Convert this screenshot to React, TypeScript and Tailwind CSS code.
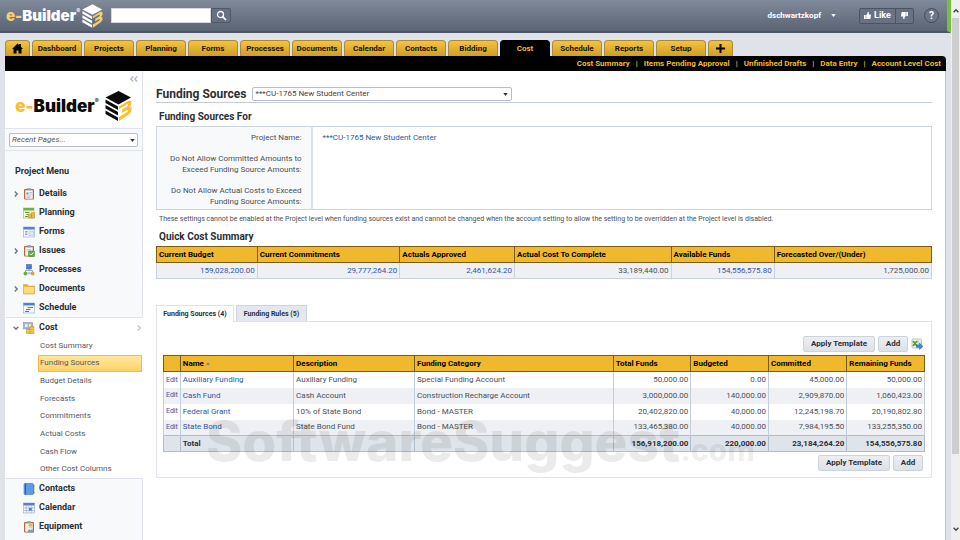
import clsx from 'clsx'
import type { ReactNode } from 'react'

const TABS = [
	'Dashboard',
	'Projects',
	'Planning',
	'Forms',
	'Processes',
	'Documents',
	'Calendar',
	'Contacts',
	'Bidding',
	'Cost',
	'Schedule',
	'Reports',
	'Setup',
]

const SUB_LINKS = ['Cost Summary', 'Items Pending Approval', 'Unfinished Drafts', 'Data Entry', 'Account Level Cost']

const COST_PAGES = [
	'Cost Summary',
	'Funding Sources',
	'Budget Details',
	'Forecasts',
	'Commitments',
	'Actual Costs',
	'Cash Flow',
	'Other Cost Columns',
]

const SUMMARY = [
	{ label: 'Current Budget', value: '159,028,200.00', link: true, width: 'w-[13%]' },
	{ label: 'Current Commitments', value: '29,777,264.20', link: true, width: 'w-[18.4%]' },
	{ label: 'Actuals Approved', value: '2,461,624.20', link: true, width: 'w-[14.8%]' },
	{ label: 'Actual Cost To Complete', value: '33,189,440.00', link: false, width: 'w-[20.2%]' },
	{ label: 'Available Funds', value: '154,556,575.80', link: true, width: 'w-[13.3%]' },
	{ label: 'Forecasted Over/(Under)', value: '1,725,000.00', link: false, width: 'w-[20.3%]' },
]

const FUNDS = [
	['Auxiliary Funding', 'Auxiliary Funding', 'Special Funding Account', '50,000.00', '0.00', '45,000.00', '50,000.00'],
	['Cash Fund', 'Cash Account', 'Construction Recharge Account', '3,000,000.00', '140,000.00', '2,909,870.00', '1,060,423.00'],
	['Federal Grant', '10% of State Bond', 'Bond - MASTER', '20,402,820.00', '40,000.00', '12,245,198.70', '20,190,802.80'],
	['State Bond', 'State Bond Fund', 'Bond - MASTER', '133,465,380.00', '40,000.00', '7,984,195.50', '133,255,350.00'],
]

const TOTALS = ['156,918,200.00', '220,000.00', '23,184,264.20', '154,556,575.80']

function Cube({ className, dark }: { className: string; dark?: boolean }) {
	const main = dark ? '#0b0b0b' : '#ffffff'
	const accent = dark ? '#fdbb30' : '#f7cf6b'
	return (
		<svg aria-hidden="true" className={className} viewBox="0 0 54 60">
			<path d="M27 0 52 13 27 27 1 13Z" fill={main} />
			<path d="M1 17 26 31v7L1 24ZM1 28l25 14v7L1 35ZM1 39l25 14v7L1 46Z" fill={main} />
			<path
				d="M28 31 46 20q7-3 7 4 0 5-4 8 5 0 4 6-1 6-6 9L28 60v-8l15-9q3-2 3-4 0-2-4 0l-8 5v-7l9-5q3-2 3-4t-3-1l-15 9Z"
				fill={accent}
			/>
		</svg>
	)
}

function Logo({ dark }: { dark?: boolean }) {
	return (
		<a
			className={clsx(
				"flex items-center font-['Inter','Liberation_Sans',sans-serif] font-black leading-none",
				dark ? 'gap-[6px] text-[17px] text-[#0b0b0b]' : 'gap-[2px] text-[15px] text-white'
			)}
			href="#home"
		>
			<span className="flex">
				<span className={dark ? 'text-[#fdbb30]' : 'text-[#f7cf6b]'}>e-</span>Builder
				<span className="text-[6px] font-normal">®</span>
			</span>
			<Cube className={dark ? 'h-[30px] w-[27px]' : 'h-[24px] w-[21px]'} dark={dark} />
		</a>
	)
}

type IconName =
	| 'details'
	| 'planning'
	| 'forms'
	| 'issues'
	| 'processes'
	| 'documents'
	| 'schedule'
	| 'cost'
	| 'contacts'
	| 'calendar'
	| 'equipment'

const clipboard = (
	<>
		<rect fill="#b5693f" height="21" rx="2" width="20" x="2" y="2" />
		<rect fill="#f3f5f9" height="17" width="15" x="4.500" y="4.500" />
		<rect fill="#8f99a8" height="4" rx="1" width="9" x="7.500" y="0.500" />
	</>
)

const windowFrame = (
	<>
		<rect fill="#f4f8fd" height="20" stroke="#7d9cc6" width="22" x="1" y="2" />
		<rect fill="#4f83cf" height="5" width="22" x="1" y="2" />
	</>
)

const ICONS: Record<IconName, ReactNode> = {
	details: (
		<>
			{clipboard}
			<path d="M7 9h4v4H7z" fill="#7286a8" />
			<path d="M13 9h5M13 12h4M7 16h10M7 19h7" stroke="#8d9ab0" strokeWidth="1.200" />
		</>
	),
	planning: (
		<>
			<rect fill="#eef7e8" height="20" stroke="#7db35c" width="21" x="1" y="2" />
			<rect fill="#6cb33f" height="5" width="21" x="1" y="2" />
			<path d="M4 11h9M7 15h6M4 19h6" stroke="#5ca035" strokeWidth="2" />
			<path d="M11 14h6v8h-6zM17 11h6v11h-6z" fill="#f0b83a" stroke="#c98b17" />
		</>
	),
	forms: (
		<>
			{windowFrame}
			<path d="M4 11h5M4 14h5M4 17h5" stroke="#6c8fc4" strokeWidth="1.500" />
			<path d="M12 10h9v9h-9z" fill="#dbe6f5" stroke="#a4bada" />
		</>
	),
	issues: (
		<>
			{clipboard}
			<path d="M7 9h9M7 12h9" stroke="#9aa5b8" />
			<rect fill="#5cb043" height="11" rx="1" stroke="#3b8a27" width="12" x="11" y="12" />
			<path d="m13.500 17 3 3 4.500-5" fill="none" stroke="#fff" strokeWidth="2" />
		</>
	),
	processes: (
		<>
			<path d="M12 8v5M5 18v-5h14v5" fill="none" stroke="#8293ad" strokeWidth="1.500" />
			<rect fill="#4a7fd0" height="9" stroke="#3561a7" width="10" x="7" y="1" />
			<circle cx="5" cy="19" fill="#64b246" r="4" />
			<circle cx="12" cy="18" fill="#b8c6dc" r="3" />
			<circle cx="19" cy="19" fill="#f29a36" r="4" />
		</>
	),
	documents: (
		<>
			<path d="M1 3h8l2 3h12v16H1z" fill="#e8b635" />
			<path d="M2 8h20v13H2z" fill="#fbdc78" />
			<path d="M1 3h8l2 3h12v16H1z" fill="none" stroke="#d19f25" />
		</>
	),
	schedule: (
		<>
			{windowFrame}
			<path d="M9 11h11M6 15h9M4 19h8" stroke="#3f7cd0" strokeWidth="2.200" />
		</>
	),
	cost: (
		<>
			<rect fill="#a9b4c6" height="13" stroke="#7f8ca1" width="18" x="1" y="1" />
			<path d="M4 4h5v6H4zM12 4h4v6h-4z" fill="#e9eef5" />
			<path d="M7 14h7v9H7zM14 9h8v14h-8z" fill="#f2b431" stroke="#c78a17" />
			<path d="M7 17h15M7 20h15M14 13h8" stroke="#fbd77c" />
		</>
	),
	contacts: (
		<>
			<path d="M20 4h3v5h-3z" fill="#5cb043" />
			<path d="M20 10h3v5h-3z" fill="#f2b431" />
			<path d="M20 16h3v5h-3z" fill="#e0663a" />
			<rect fill="#5b9be8" height="22" rx="2" stroke="#2e62b0" width="19" x="2" y="1" />
			<path d="M5 1v22" stroke="#2e62b0" strokeWidth="2" />
		</>
	),
	calendar: (
		<>
			{windowFrame}
			<path d="M1 12h22M1 17h22M6.500 7v15M12 7v15M17.500 7v15" stroke="#8fa9cf" strokeWidth="1.300" />
			<path d="M12 12h5.500v5H12z" fill="#4f83cf" />
		</>
	),
	equipment: (
		<>
			{clipboard}
			<circle cx="15" cy="11" fill="#f3c992" r="4" />
			<path d="M10.500 10q0-5 4.500-5t4.500 5z" fill="#f2b431" />
			<path d="M9 23q0-7 6-7t7 7z" fill="#7d9cc6" />
			<path d="m13 16 2 3 2-3z" fill="#fff" />
		</>
	),
}

function MenuIcon({ name }: { name: IconName }) {
	return (
		<svg aria-hidden="true" className="size-3" viewBox="0 0 24 24">
			{ICONS[name]}
		</svg>
	)
}

function Chevron({ className }: { className?: string }) {
	return (
		<svg aria-hidden="true" className={clsx('size-[6px]', className)} fill="none" viewBox="0 0 10 10">
			<path d="m3 1 4 4-4 4" stroke="currentColor" strokeWidth="2.400" />
		</svg>
	)
}

function MenuItem({ label, icon, expandable, open }: { label: string; icon: IconName; expandable?: boolean; open?: boolean }) {
	return (
		<a className="flex h-[19px] items-center pl-2 pr-px text-[9px] font-bold text-[#2b2f36]" href={`#${icon}`}>
			<span className="w-[10px] text-[#6f7683]">{expandable && <Chevron className={open ? 'rotate-90' : undefined} />}</span>
			<MenuIcon name={icon} />
			<span className="ml-1 flex-1">{label}</span>
			{open && <Chevron className="text-[#c3cad6]" />}
		</a>
	)
}

function Caret({ className }: { className: string }) {
	return (
		<svg aria-hidden="true" className={clsx('pointer-events-none', className)} viewBox="0 0 6 4">
			<path d="M0 0h6L3 4Z" fill="currentColor" />
		</svg>
	)
}

function TopBar() {
	return (
		<header className="flex h-[33px] shrink-0 items-center border-b-2 border-r-4 border-b-[#4c5564] border-r-[#74c043] bg-linear-to-b from-[#7f8a9a] to-[#5b6473] pl-[6px] pr-2 text-white">
			<div className="w-[105px]">
				<Logo />
			</div>
			<form className="flex h-[15px] flex-1">
				<input aria-label="Search" className="w-[100px] border border-[#d5d9df] bg-white px-1 text-[8px] text-black outline-none" type="text" />
				<button aria-label="Search" className="flex w-5 items-center justify-center rounded-r-xs border border-[#4f5867] bg-[#667080]" type="button">
					<svg aria-hidden="true" className="size-[11px]" fill="none" stroke="#fff" viewBox="0 0 22 22">
						<circle cx="9" cy="9" r="6" strokeWidth="2.600" />
						<path d="m13 13 7 7" strokeWidth="3.500" />
					</svg>
				</button>
			</form>
			<button className="flex items-center gap-[10px] text-[8px] font-bold" type="button">
				dschwartzkopf
				<Caret className="h-[3px] w-[5px]" />
			</button>
			<div className="ml-[23px] flex h-4 overflow-hidden rounded-xs border border-[#4a5362] bg-[#687282] text-[9px] font-bold">
				<button className="flex w-[36px] items-center justify-center gap-[3px] border-r border-[#4a5362]" type="button">
					<Thumb />
					Like
				</button>
				<button aria-label="Dislike" className="flex w-[17px] items-center justify-center" type="button">
					<Thumb className="rotate-180" />
				</button>
			</div>
			<button
				aria-label="Help"
				className="ml-[10px] flex size-[15px] items-center justify-center rounded-full border border-[#434c5a] bg-[#6b7585] text-[10px] font-bold"
				type="button"
			>
				?
			</button>
		</header>
	)
}

function Thumb({ className }: { className?: string }) {
	return (
		<svg aria-hidden="true" className={clsx('size-[7px]', className)} fill="#fff" viewBox="0 0 14 14">
			<path d="M0 6h3.500v8H0zM4.500 6 7 3V0h2q1.500 1 .5 5H14l-1 8-1 1H4.500z" />
		</svg>
	)
}

function TabBar() {
	const tab = 'flex h-4 items-center justify-center rounded-t-sm border border-b-0 text-[8px] font-bold'
	const gold = 'border-[#a98a3c] bg-linear-to-b from-[#f3c340] to-[#cf9f26] text-[#17130a]'
	return (
		<nav className="mt-[7px] flex gap-[2px]">
			<a aria-label="Home" className={clsx(tab, gold, 'w-[25px]')} href="#home">
				<svg aria-hidden="true" className="size-[11px]" viewBox="0 0 22 22">
					<path d="M11 1 14 4V2h4v6l4 4h-3v9h-6v-6H9v6H3v-9H0Z" />
				</svg>
			</a>
			{TABS.map((name) => (
				<a
					className={clsx(tab, 'w-[50px]', name === 'Cost' ? 'border-black bg-black text-[#f0b92d]' : gold)}
					href={`#${name.toLowerCase()}`}
					key={name}
				>
					{name}
				</a>
			))}
			<a aria-label="Add tab" className={clsx(tab, gold, 'w-[25px]')} href="#add">
				<svg aria-hidden="true" className="size-[9px]" viewBox="0 0 9 9">
					<path d="M3.500 0h2v3.500H9v2H5.500V9h-2V5.500H0v-2h3.500z" />
				</svg>
			</a>
		</nav>
	)
}

function Sidebar() {
	return (
		<aside className="w-[138px] shrink-0 border-r border-[#dfe3ea] bg-[#f8f9fb]">
			<div className="flex h-[58px] flex-col border-b border-[#e1e5eb] bg-white">
				<button aria-label="Collapse menu" className="flex self-end pr-[3px] pt-[5px] text-[#b3bac8]" type="button">
					<Chevron className="rotate-180" />
					<Chevron className="-ml-[2px] rotate-180" />
				</button>
				<div className="flex justify-center pt-[9px]">
					<Logo dark />
				</div>
			</div>
			<div className="border-b border-[#e1e5eb] px-1 pb-[3px] pt-1">
				<div className="relative flex">
					<select
						aria-label="Recent pages"
						className="h-[14px] w-full appearance-none rounded-xs border border-[#b9bec6] bg-white px-[2px] text-[8px] italic text-[#555]"
					>
						<option>Recent Pages...</option>
					</select>
					<Caret className="absolute right-[3px] top-[6px] h-[3px] w-[5px] text-[#333]" />
				</div>
			</div>
			<h2 className="px-[10px] pb-[6px] pt-[13px] text-[9px] font-bold leading-[14px] text-[#2b2f36]">Project Menu</h2>
			<MenuItem expandable icon="details" label="Details" />
			<MenuItem icon="planning" label="Planning" />
			<MenuItem icon="forms" label="Forms" />
			<MenuItem expandable icon="issues" label="Issues" />
			<MenuItem icon="processes" label="Processes" />
			<MenuItem expandable icon="documents" label="Documents" />
			<MenuItem icon="schedule" label="Schedule" />
			<div className="-mr-px border-y border-[#e1e5eb] bg-white">
				<MenuItem expandable icon="cost" label="Cost" open />
				<ul className="grid h-[141px] auto-rows-fr pl-[33px] pr-px">
					{COST_PAGES.map((page) => (
						<li className="flex" key={page}>
							<a
								className={clsx(
									'flex flex-1 items-center border px-px text-[8px] text-[#555a63]',
									page === 'Funding Sources' ? 'border-[#f3bd3c] bg-linear-to-b from-[#ffe7a0] to-[#fdd263]' : 'border-transparent'
								)}
								href="#cost"
							>
								{page}
							</a>
						</li>
					))}
				</ul>
			</div>
			<MenuItem icon="contacts" label="Contacts" />
			<MenuItem icon="calendar" label="Calendar" />
			<MenuItem icon="equipment" label="Equipment" />
		</aside>
	)
}

const goldHead = 'h-4 border border-[#7a5c17] bg-[#f0b82c] px-[2px] text-left font-bold text-black'

function SummaryTable() {
	return (
		<table className="w-full table-fixed border-collapse text-[8px]">
			<thead>
				<tr>
					{SUMMARY.map((col) => (
						<th className={clsx(goldHead, col.width)} key={col.label} scope="col">
							{col.label}
						</th>
					))}
				</tr>
			</thead>
			<tbody>
				<tr className="bg-[#eef0f3]">
					{SUMMARY.map((col) => (
						<td className="h-4 border border-[#c9d2dd] px-[2px] text-right" key={col.label}>
							{col.link ? (
								<a className="text-[#3157a4]" href="#cost">
									{col.value}
								</a>
							) : (
								col.value
							)}
						</td>
					))}
				</tr>
			</tbody>
		</table>
	)
}

function Actions({ children }: { children?: ReactNode }) {
	const button = 'h-4 rounded-xs border border-[#cdd3dc] bg-linear-to-b from-[#eceef2] to-[#dde1e8] text-[8px] font-bold text-[#2b2f36]'
	return (
		<div className="flex items-center justify-end gap-[3px] pr-[2px]">
			<button className={clsx(button, 'w-[72px]')} type="button">
				Apply Template
			</button>
			<button className={clsx(button, 'w-[30px]')} type="button">
				Add
			</button>
			{children}
		</div>
	)
}

function FundsTable() {
	const cell = 'border-x border-[#c3cedd] px-[2px]'
	const total = 'h-4 border border-[#afbdd0] px-[2px]'
	return (
		<table className="my-[3px] w-full table-fixed border-collapse text-[8px]">
			<thead>
				<tr>
					<th aria-label="Edit" className={clsx(goldHead, 'w-[2.2%]')} scope="col" />
					<th className={clsx(goldHead, 'w-[14.9%]')} scope="col">
						Name <Caret className="inline h-[3px] w-1 rotate-180 text-[#5f83b5]" />
					</th>
					<th className={clsx(goldHead, 'w-[15.9%]')} scope="col">
						Description
					</th>
					<th className={clsx(goldHead, 'w-[26.1%]')} scope="col">
						Funding Category
					</th>
					<th className={clsx(goldHead, 'w-[10.2%]')} scope="col">
						Total Funds
					</th>
					<th className={clsx(goldHead, 'w-[10.2%]')} scope="col">
						Budgeted
					</th>
					<th className={clsx(goldHead, 'w-[10.3%]')} scope="col">
						Committed
					</th>
					<th className={clsx(goldHead, 'w-[10.2%]')} scope="col">
						Remaining Funds
					</th>
				</tr>
			</thead>
			<tbody>
				{FUNDS.map(([name, description, category, ...amounts], i) => (
					<tr className={clsx(i % 2 === 1 && 'bg-[#eef0f3]')} key={name}>
						<td className={clsx(cell, 'h-4 text-center text-[7px]')}>
							<a className="text-[#3157a4]" href="#edit">
								Edit
							</a>
						</td>
						<td className={cell}>
							<a className="text-[#3157a4]" href="#fund">
								{name}
							</a>
						</td>
						<td className={cell}>{description}</td>
						<td className={cell}>{category}</td>
						{amounts.map((amount, j) => (
							<td className={clsx(cell, 'text-right')} key={j}>
								{amount}
							</td>
						))}
					</tr>
				))}
			</tbody>
			<tfoot>
				<tr className="bg-[#dfe4ea] font-bold text-[#2b2f36]">
					<td className={total} />
					<td className={total}>Total</td>
					<td className={total} />
					<td className={total} />
					{TOTALS.map((amount) => (
						<td className={clsx(total, 'text-right')} key={amount}>
							{amount}
						</td>
					))}
				</tr>
			</tfoot>
		</table>
	)
}

function ProjectSettings() {
	const label = 'border-r-2 border-[#dbe1e9] bg-[#f8f9fb] pr-[9px] text-right align-top font-normal'
	return (
		<table className="w-full border border-[#ccd5df] text-[8px] leading-[11px]">
			<tbody>
				<tr>
					<th className={clsx(label, 'w-[20%] py-[5px]')} scope="row">
						Project Name:
					</th>
					<td className="pl-[10px] pt-[5px] align-top">
						<a className="text-[#3157a4]" href="#project">
							***CU-1765 New Student Center
						</a>
					</td>
				</tr>
				<tr>
					<th className={clsx(label, 'py-[5px]')} scope="row">
						Do Not Allow Committed Amounts to
						<br />
						Exceed Funding Source Amounts:
					</th>
					<td />
				</tr>
				<tr>
					<th className={clsx(label, 'pb-[2px] pt-[5px]')} scope="row">
						Do Not Allow Actual Costs to Exceed
						<br />
						Funding Source Amounts:
					</th>
					<td />
				</tr>
			</tbody>
		</table>
	)
}

function ExportIcon() {
	return (
		<svg aria-hidden="true" className="size-3" viewBox="0 0 24 24">
			<rect fill="#f4f8f0" height="18" rx="2" stroke="#6fa356" width="19" x="2" y="2" />
			<path d="M3 8h17M3 14h17M14 3v16" stroke="#8aa5c8" />
			<path d="m4 6 8 10M12 6 4 16" stroke="#4b9a31" strokeWidth="3" />
			<path d="M11 14h6v-4l7 7-7 6v-4h-6z" fill="#4585da" stroke="#2a61ae" />
		</svg>
	)
}

function FundingSources() {
	return (
		<main className="min-w-0 flex-1 px-[13px] pt-[15px]">
			<div className="flex items-center gap-[6px] border-b border-[#c5ccd6]">
				<h1 className="text-[12px] font-bold leading-4 text-[#2b2f36]">Funding Sources</h1>
				<div className="relative flex">
					<select
						aria-label="Project"
						className="h-[14px] w-[260px] appearance-none rounded-xs border border-[#b9bec6] bg-white px-[2px] text-[8px] text-[#444]"
					>
						<option>***CU-1765 New Student Center</option>
					</select>
					<Caret className="absolute right-1 top-[6px] h-[3px] w-[5px] text-[#333]" />
				</div>
			</div>
			<h2 className="px-[3px] pb-[2px] pt-[7px] text-[10px] font-bold leading-[14px] text-[#2b2f36]">Funding Sources For</h2>
			<ProjectSettings />
			<p className="px-[3px] pt-1 text-[7px] leading-[11px]">
				These settings cannot be enabled at the Project level when funding sources exist and cannot be changed when the account setting to allow
				the setting to be overridden at the Project level is disabled.
			</p>
			<h2 className="px-[3px] pb-[2px] pt-[5px] text-[10px] font-bold leading-[14px] text-[#2b2f36]">Quick Cost Summary</h2>
			<SummaryTable />
			<div className="mt-[26px] flex gap-[2px] text-[7px] font-bold text-[#2b2f36]">
				<button className="-mb-px h-[17px] w-[78px] border border-b-0 border-[#dfe4ec] bg-white" type="button">
					Funding Sources (4)
				</button>
				<button className="h-4 w-[71px] border border-b-0 border-[#cdd4de] bg-[#e4e8ee] pt-px" type="button">
					Funding Rules (5)
				</button>
			</div>
			<section className="border border-[#dfe4ec] px-[6px] pb-[6px] pt-[14px]">
				<Actions>
					<ExportIcon />
				</Actions>
				<div className="relative">
					<FundsTable />
					<div className="pointer-events-none absolute left-[43px] top-[56px] whitespace-nowrap font-['Inter',sans-serif] text-[55px] font-extrabold leading-[60px] text-black/8">
						SoftwareSuggest<span className="text-[30px]">.com</span>
					</div>
				</div>
				<Actions />
			</section>
		</main>
	)
}

function ScrollBar() {
	return (
		<div className="flex w-[9px] shrink-0 flex-col items-center justify-between bg-[#efefef] pb-2 pt-2 text-[#444]">
			<Chevron className="-rotate-90" />
			<div className="mb-[72px] mt-1 w-[7px] flex-1 bg-[#cdcdcd]" />
			<Chevron className="rotate-90" />
		</div>
	)
}

export default function App() {
	return (
		<div className="flex h-screen overflow-hidden bg-[#e0e2ea] font-['Roboto','Noto_Sans',sans-serif] text-[#4b4f57]">
			<div className="flex min-w-0 flex-1 flex-col">
				<TopBar />
				<div className="ml-[5px] mr-[5px] flex min-h-0 flex-1 flex-col">
					<TabBar />
					<div className="flex h-[15px] shrink-0 items-center justify-end rounded-tr-sm bg-black pr-[5px] text-[8px] font-bold text-[#f0b92d]">
						{SUB_LINKS.map((link, i) => (
							<span className="flex" key={link}>
								{i > 0 && <span className="px-[6px]">|</span>}
								<a href="#cost">{link}</a>
							</span>
						))}
					</div>
					<div className="flex min-h-0 flex-1 overflow-hidden border-r border-[#b9c4d2] bg-white">
						<Sidebar />
						<FundingSources />
					</div>
				</div>
			</div>
			<ScrollBar />
		</div>
	)
}
